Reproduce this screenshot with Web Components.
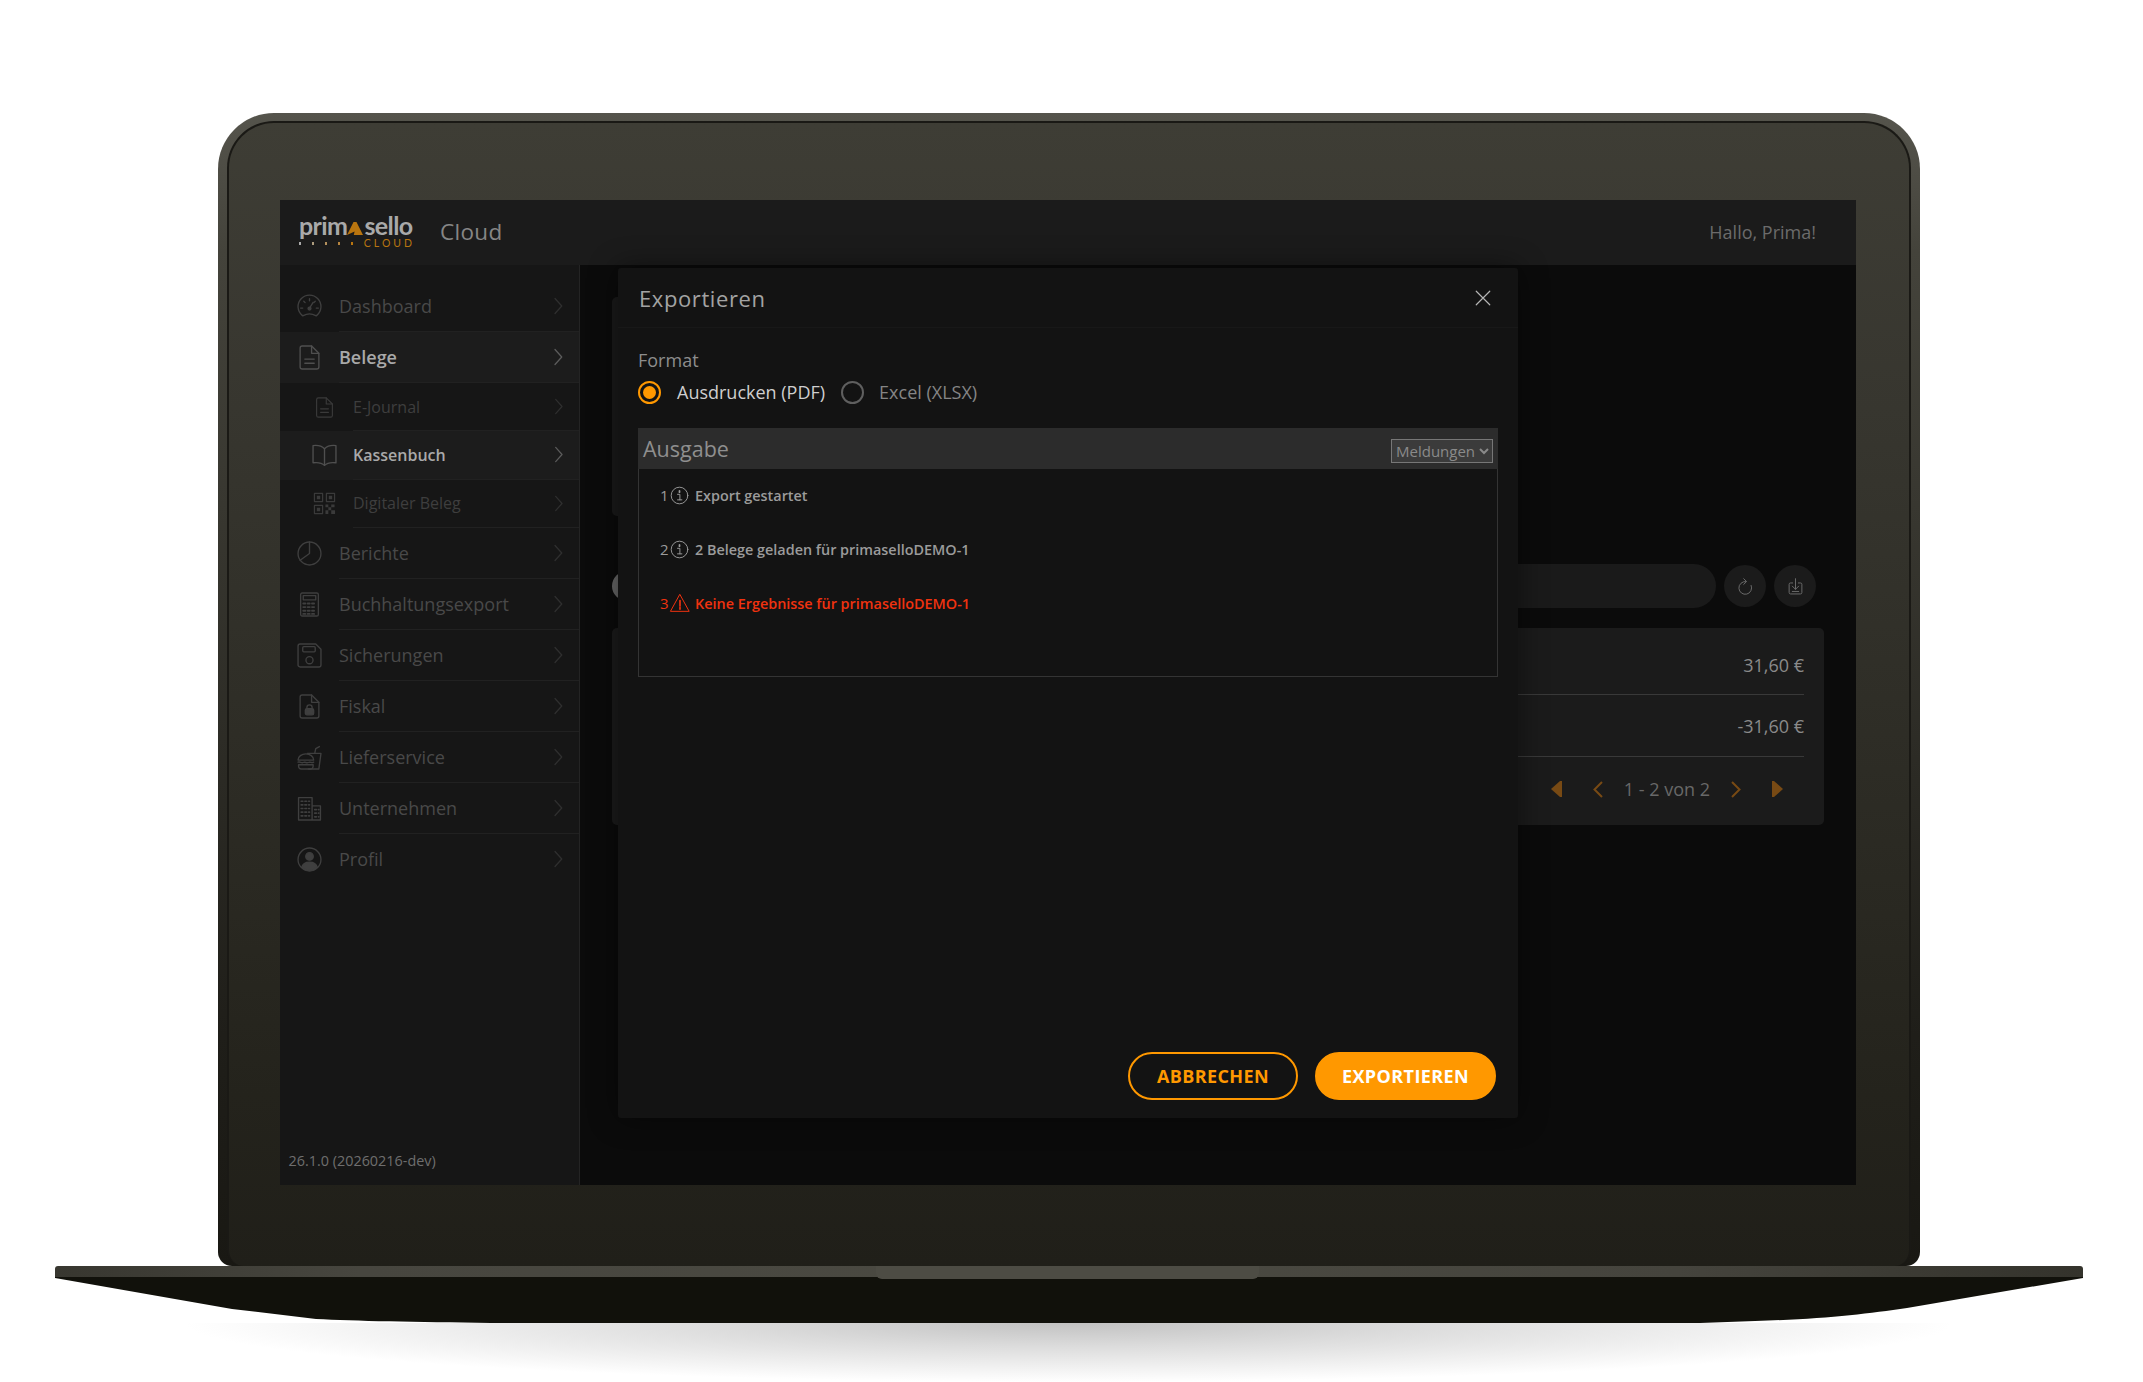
<!DOCTYPE html>
<html lang="de">
<head>
<meta charset="utf-8">
<title>primasello Cloud</title>
<style>
  html, body { margin: 0; background: #fff; }
  body { width: 2143px; height: 1382px; overflow: hidden; font-family: "Open Sans", "Liberation Sans", sans-serif; }
</style>
</head>
<body>

<laptop-frame>
  <cloud-header></cloud-header>
  <side-nav slot="nav">
    <nav-item icon="gauge">Dashboard</nav-item>
    <nav-item icon="doc" active>Belege</nav-item>
    <nav-item icon="doc" sub size="21">E-Journal</nav-item>
    <nav-item icon="book" sub active>Kassenbuch</nav-item>
    <nav-item icon="qr" sub size="23">Digitaler Beleg</nav-item>
    <nav-item icon="pie">Berichte</nav-item>
    <nav-item icon="calc">Buchhaltungsexport</nav-item>
    <nav-item icon="floppy">Sicherungen</nav-item>
    <nav-item icon="lockdoc">Fiskal</nav-item>
    <nav-item icon="burger">Lieferservice</nav-item>
    <nav-item icon="building">Unternehmen</nav-item>
    <nav-item icon="user" last>Profil</nav-item>
    <span slot="version">26.1.0 (20260216-dev)</span>
  </side-nav>
  <receipt-page slot="main">
    <export-dialog slot="dialog">
      <radio-option checked>Ausdrucken (PDF)</radio-option>
      <radio-option>Excel (XLSX)</radio-option>
      <log-row slot="log" nr="1">Export gestartet</log-row>
      <log-row slot="log" nr="2">2 Belege geladen für primaselloDEMO-1</log-row>
      <log-row slot="log" nr="3" error>Keine Ergebnisse für primaselloDEMO-1</log-row>
    </export-dialog>
  </receipt-page>
</laptop-frame>

<script type="module">
    const ICONS = {
        gauge: '<path d="M5 20.5A11 11 0 1 1 19 20.5C19 21 18.5 21 18 20.7C14.5 18.8 9.5 18.8 6 20.7C5.5 21 5 21 5 20.5Z"/><path d="M12 13.5L15.5 8"/><circle cx="12" cy="14" r="1.4" fill="currentColor"/><path d="M12 4.5V6.5M6.5 7L7.8 8.3M17.5 7L16.2 8.3M3.5 13.5H5.5M18.5 13.5H20.5"/>',
        doc: '<path d="M5 1H14L21 8V21A2 2 0 0 1 19 23H5A2 2 0 0 1 3 21V3A2 2 0 0 1 5 1Z"/><path d="M14 1V8H21M7.5 13.5H16.5M7.5 17.5H16.5"/>',
        book: '<path d="M12 5.5C9.5 3 5 2 1 2.5V19C5 18.5 9.5 19 12 21.5C14.5 19 19 18.5 23 19V2.5C19 2 14.5 3 12 5.5Z"/><path d="M12 5.5V21.5"/>',
        qr: '<path d="M1.5 1.5H10V10H1.5ZM14 1.5H22.5V10H14ZM1.5 14H10V22.5H1.5Z"/><path fill="currentColor" stroke="none" d="M4 4H7.5V7.5H4ZM16.5 4H20V7.5H16.5ZM4 16.5H7.5V20H4ZM13 13H16V16H13ZM19 13H22.5V16H19ZM16 16H19V19H16ZM13 19H16V23H13ZM19 19H23V23H19Z"/>',
        pie: '<circle cx="12" cy="12" r="11"/><path d="M12 1V12L3 18.5"/>',
        calc: '<rect x="3.5" y="1" width="17" height="22" rx="1.5"/><rect x="6" y="3.5" width="12" height="4"/><path stroke-dasharray="2 2.2" stroke-width="1.8" d="M6 11H18M6 14.5H18M6 18H18M6 21H18"/>',
        floppy: '<path d="M3 1H18L23 6V21A2 2 0 0 1 21 23H3A2 2 0 0 1 1 21V3A2 2 0 0 1 3 1Z"/><rect x="5.5" y="3.5" width="12" height="5" rx="1"/><circle cx="12" cy="16.5" r="3.4"/>',
        lockdoc: '<path d="M5 1H14L21 8V21A2 2 0 0 1 19 23H5A2 2 0 0 1 3 21V3A2 2 0 0 1 5 1Z"/><path d="M14 1V8H21M9.5 14V13A2.5 2.5 0 0 1 14.5 13V14"/><rect x="8" y="14" width="8" height="6" rx="1.5" fill="currentColor"/>',
        burger: '<path d="M10 8H23L21 23H11M17 8L18 3.5L21.5 1.5"/><path d="M1 14.5C1 11 4.5 8.5 8.5 8.5S16 11 16 14.5ZM1 16.5C3 15.5 4 17.8 6 16.8S9 17.8 11 16.8S14 17.8 16 16.5"/><path d="M1.5 19H15.5V20.5A2.5 2.5 0 0 1 13 23H4A2.5 2.5 0 0 1 1.5 20.5Z"/>',
        building: '<path d="M1.5 23V1.5H14.5V23ZM14.5 9.5H22.5V23H1.5"/><path stroke-dasharray="1.6 2" stroke-width="1.6" d="M4 5H12M4 8.5H12M4 12H12M4 15.5H12M4 19H12M17 13H21M17 16.5H21M17 20H21"/>',
        user: '<circle cx="12" cy="12" r="11"/><circle cx="12" cy="9" r="3.6" fill="currentColor"/><path fill="currentColor" d="M4.5 19.5C5.5 16 8.5 14.5 12 14.5S18.5 16 19.5 19.5C15 23.5 9 23.5 4.5 19.5Z"/>',
        chevron: '<path d="M8 2L17 12L8 22"/>',
        close: '<path d="M3 3L21 21M21 3L3 21"/>',
        info: '<circle cx="12" cy="12" r="10.5"/><path d="M9.5 10.5H12.5V17.5M9.5 17.5H15"/><path stroke-width="2.2" d="M12 6.2V7.8"/>',
        warn: '<path d="M12 2L23 22H1Z"/><path stroke-width="2" d="M12 9V15.5M12 17.5V19.5"/>',
        refresh: '<path d="M20 10.5A9 9 0 1 1 12.5 5"/><path d="M9.5 1L13.5 5L9.5 9"/>',
        save: '<path d="M8 7H5A2 2 0 0 0 3 9V20.5A2 2 0 0 0 5 22.5H19A2 2 0 0 0 21 20.5V9A2 2 0 0 0 19 7H16"/><path d="M12 1V16M7.5 11.5L12 16L16.5 11.5"/><path d="M7.5 19H16.5"/>'
    };

    function shadow(host, html) {
        host.attachShadow({ mode: 'open' }).innerHTML = html;
    }

    class AppIcon extends HTMLElement {
        connectedCallback() {
            const size = this.getAttribute('size') || 25;
            const sw = this.getAttribute('stroke') || 1.3;
            shadow(this, `<style>
                :host { display: inline-flex; flex: none; width: ${size}px; height: ${size}px; }
                svg { width: 100%; height: 100%; display: block; overflow: visible; }
            </style>
            <svg viewBox="0 0 24 24" fill="none" stroke="currentColor" stroke-width="${sw}" stroke-linecap="round" stroke-linejoin="round">${ICONS[this.getAttribute('name')]}</svg>`);
        }
    }

    class LaptopFrame extends HTMLElement {
        constructor() {
            super();
            shadow(this, `<style>
                :host { display: block; width: 2028px; padding: 113px 0 0 55px; }
                .lid { margin: 0 163px; height: 1153px; box-sizing: border-box; padding: 8px 9px 0 9px; border-radius: 56px 56px 14px 14px;
                       background: linear-gradient(#55544c, #44433b 12%, #1f1e19 80%, #191813); }
                .bezel { height: 100%; box-sizing: border-box; padding: 77px 51px 0; border-radius: 47px 47px 16px 16px; border: 2px solid #1a1915;
                         border-bottom: 0; background: linear-gradient(#3e3d35, #37362f 25%, #24231c 85%, #201f19); }
                .screen { width: 1576px; height: 985px; display: flex; flex-direction: column; background: #0b0b0b; overflow: hidden; }
                .row { flex: 1; display: flex; min-height: 0; }
                .deck { position: relative; height: 11px; border-radius: 3px 3px 0 0; background: linear-gradient(90deg, #383730, #47463f 15%, #4b4a42 50%, #45443d 80%, #34332c); }
                .notch { position: absolute; left: 821px; width: 383px; top: 0; height: 13px; border-radius: 0 0 6px 6px; background: #4d4c44; }
                svg { display: block; }
                .floor { height: 59px; margin: 0 130px; background: radial-gradient(ellipse 50% 100% at 50% 0, #c2c2c2, #dcdcdc 40%, rgba(255,255,255,0) 100%); }
            </style>
            <div class="lid"><div class="bezel"><div class="screen">
                <slot></slot>
                <div class="row"><slot name="nav"></slot><slot name="main"></slot></div>
            </div></div></div>
            <div class="deck"><div class="notch"></div></div>
            <svg width="2028" height="46" viewBox="0 0 2028 46"><path fill="#11110b" d="M0 0H2028V1L1852 31C1810 37 1770 42 1700 44L1645 46H436C360 45 300 44 261 42L177 32L0 1Z"/></svg>
            <div class="floor"></div>`);
        }
    }

    class CloudHeader extends HTMLElement {
        constructor() {
            super();
            shadow(this, `<style>
                :host { display: flex; align-items: center; flex: none; height: 65px; box-sizing: border-box; padding: 0 40px 2px 19px; background: #1b1b1b; color: #868686; font-family: "Open Sans", sans-serif; }
                .logo { width: 116px; margin: 0 25px 3px 0; font-family: Lato, sans-serif; }
                .word { display: flex; align-items: flex-end; height: 26px; font-size: 25px; font-weight: 700; line-height: 26px; letter-spacing: -.6px; color: #a9a9a9; }
                .word svg { margin: 0 1px 3px 0; flex: none; }
                .sub { display: flex; align-items: center; height: 9px; margin-top: 1px; }
                .sub i { width: 3px; height: 3px; margin-right: 10.5px; }
                .sub span { font-size: 10.5px; line-height: 9px; letter-spacing: 3px; color: #b9750f; }
                .title { font-size: 22.5px; letter-spacing: .3px; margin-bottom: 1px; }
                .hello { margin-left: auto; font-size: 18px; color: #6b6b6b; }
            </style>
            <div class="logo">
                <div class="word">prim<svg width="16" height="13" viewBox="0 0 16 13"><path fill="#b9750f" d="M0 13L6.5 0H9.5L16 13H6.8L7.6 9.5Z"/></svg>sello</div>
                <div class="sub"><i style="background:#a9a9a9"></i><i style="background:#ad9c7e"></i><i style="background:#b3905c"></i><i style="background:#b5843f"></i><i style="background:#b9750f"></i><span>CLOUD</span></div>
            </div>
            <span class="title">Cloud</span>
            <span class="hello">Hallo, Prima!</span>`);
        }
    }

    class SideNav extends HTMLElement {
        constructor() {
            super();
            shadow(this, `<style>
                :host { display: flex; flex-direction: column; flex: none; width: 300px; height: 100%; box-sizing: border-box; padding-top: 16px; background: #161616; border-right: 1px solid #242424; font-family: "Open Sans", sans-serif; }
                .version { margin-top: auto; padding: 0 0 14px 8.5px; font-size: 14.4px; line-height: 20px; color: #6e6e6e; }
            </style>
            <slot></slot>
            <div class="version"><slot name="version"></slot></div>`);
        }
    }

    class NavItem extends HTMLElement {
        connectedCallback() {
            const sub = this.hasAttribute('sub');
            const active = this.hasAttribute('active');
            const size = this.getAttribute('size') || 25;
            const box = 25;
            shadow(this, `<style>
                :host { display: flex; align-items: stretch; box-sizing: border-box; height: ${sub ? 48.2 : 51.1}px; background: ${active ? '#1c1c1c' : 'transparent'}; color: ${active ? '#a9a9a9' : (sub ? '#3e3e3e' : '#494949')}; }
                .ic { flex: none; display: flex; align-items: center; justify-content: center; width: ${box}px; margin-left: ${sub ? 32 : 17}px; margin-right: ${sub ? 16 : 17}px; color: ${active ? '#4f4f4f' : (sub ? '#3a3a3a' : '#3f3f3f')}; }
                .line { flex: 1; display: flex; align-items: center; justify-content: space-between; padding-right: 12px; border-bottom: 1px solid ${this.hasAttribute('last') ? 'transparent' : '#212121'}; font-size: ${sub ? 16 : 18}px; font-weight: ${active ? 600 : 400}; }
                .chev { color: ${active ? '#5c5c5c' : '#2f2f2f'}; }
            </style>
            <div class="ic"><app-icon name="${this.getAttribute('icon')}" size="${size}"></app-icon></div>
            <div class="line"><span><slot></slot></span><app-icon class="chev" name="chevron" size="${sub ? 17 : 18}" stroke="1.7"></app-icon></div>`);
        }
    }

    class ReceiptPage extends HTMLElement {
        constructor() {
            super();
            shadow(this, `<style>
                :host { display: block; position: relative; flex: 1; min-width: 0; box-sizing: border-box; padding: 32px 32px 0; background: #0b0b0b; font-family: "Open Sans", sans-serif; }
                .top { width: 760px; height: 219px; border-radius: 5px; background: #1a1a1a; }
                .filter { display: flex; align-items: center; gap: 8px; height: 44px; margin-top: 48px; padding-right: 8px; }
                .toggle { flex: none; width: 30px; height: 30px; border-radius: 50%; background: #666; }
                .search { flex: 1; height: 44px; border-radius: 22px; background: #1a1a1a; }
                .round { flex: none; display: flex; align-items: center; justify-content: center; width: 42px; height: 42px; border-radius: 50%; background: #1b1b1b; color: #6a6a6a; }
                .card { margin-top: 20px; height: 197px; border-radius: 5px; background: #1b1b1b; color: #8a8a8a; font-size: 18px; }
                .amount { display: flex; align-items: center; justify-content: flex-end; margin: 0 20px; border-bottom: 1px solid #393939; }
                .pager { display: flex; align-items: center; justify-content: flex-end; height: 64px; padding-right: 41px; color: #686868; }
                .pager svg { display: block; flex: none; color: #784a14; }
                .pager span { margin: 0 21px 0 21px; }
            </style>
            <div class="top"></div>
            <div class="filter">
                <div class="toggle"></div>
                <div class="search"></div>
                <div class="round"><app-icon name="refresh" size="17" stroke="1.4"></app-icon></div>
                <div class="round"><app-icon name="save" size="17" stroke="1.4"></app-icon></div>
            </div>
            <div class="card">
                <div class="amount" style="height:67px;padding-top:7px;box-sizing:border-box">31,60 €</div>
                <div class="amount" style="height:61px">-31,60 €</div>
                <div class="pager">
                    <svg width="11" height="16" viewBox="0 0 11 16" style="margin-right:31px"><path fill="currentColor" d="M11 0V16H9L0 8L9 0Z"/></svg>
                    <svg width="10" height="17" viewBox="0 0 10 17"><path fill="none" stroke="currentColor" stroke-width="2" d="M9 1L1.5 8.5L9 16"/></svg>
                    <span>1 - 2 von 2</span>
                    <svg width="10" height="17" viewBox="0 0 10 17" style="margin-right:31px"><path fill="none" stroke="currentColor" stroke-width="2" d="M1 1L8.5 8.5L1 16"/></svg>
                    <svg width="11" height="16" viewBox="0 0 11 16"><path fill="currentColor" d="M0 0V16H2L11 8L2 0Z"/></svg>
                </div>
            </div>
            <slot name="dialog"></slot>`);
        }
    }

    class RadioOption extends HTMLElement {
        connectedCallback() {
            const on = this.hasAttribute('checked');
            shadow(this, `<style>
                :host { display: inline-flex; align-items: center; gap: ${on ? 16 : 15}px; font-size: 18px; color: ${on ? '#cfcfcf' : '#858585'}; }
                .dot { flex: none; display: flex; align-items: center; justify-content: center; width: 23px; height: 23px; box-sizing: border-box; border-radius: 50%; border: 2px solid ${on ? '#ff9800' : '#5f5f5f'}; }
                .dot i { width: 13px; height: 13px; border-radius: 50%; background: #ff9800; display: ${on ? 'block' : 'none'}; }
            </style><span class="dot"><i></i></span><span><slot></slot></span>`);
        }
    }

    class LogRow extends HTMLElement {
        connectedCallback() {
            const err = this.hasAttribute('error');
            shadow(this, `<style>
                :host { display: flex; align-items: center; height: 54px; padding-left: 21px; color: ${err ? '#f0320f' : '#9b9b9b'}; font-size: 14.4px; font-weight: 600; }
                .nr { width: 10px; font-size: 15px; font-weight: 400; }
                .ic { display: flex; margin-right: ${err ? 5 : 6}px; color: ${err ? '#f0320f' : '#9b9b9b'}; }
            </style>
            <span class="nr">${this.getAttribute('nr')}</span>
            <span class="ic"><app-icon name="${err ? 'warn' : 'info'}" size="${err ? 20 : 19}" stroke="1.2"></app-icon></span>
            <span><slot></slot></span>`);
        }
    }

    class ExportDialog extends HTMLElement {
        constructor() {
            super();
            shadow(this, `<style>
                :host { position: absolute; left: 38px; top: 3px; width: 900px; height: 850px; display: flex; flex-direction: column; border-radius: 3px; background: #131313; box-shadow: 0 0 30px rgba(0,0,0,.45); }
                header { display: flex; align-items: center; justify-content: space-between; flex: none; height: 60px; box-sizing: border-box; padding: 0 26px 0 21px; border-bottom: 1px solid #181818; font-size: 22px; letter-spacing: .6px; color: #a3a3a3; }
                .close { color: #b5b5b5; display: flex; }
                .body { flex: 1; padding: 19px 20px 0; }
                .label { font-size: 18px; line-height: 26px; color: #8d8d8d; }
                .radios { display: flex; gap: 16px; margin: 6px 0 0; height: 26px; align-items: center; }
                .out { margin-top: 23px; height: 249px; box-sizing: border-box; border: 1px solid #343434; border-top: 0; }
                .head { display: flex; align-items: center; justify-content: space-between; height: 41px; margin: 0 -1px; padding: 0 5px; background: #2c2c2c; font-size: 21.5px; color: #8f8f8f; }
                select { width: 102px; height: 24px; box-sizing: border-box; padding: 0; margin: 5px 0 0; border: 1px solid #777; border-radius: 0; background: #3b3b3b; color: #8a8a8a; font: 15px "Open Sans", sans-serif; }
                .log { margin-top: -1px; }
                footer { display: flex; justify-content: flex-end; gap: 17px; flex: none; height: 66px; padding-right: 22px; }
                button { height: 48px; box-sizing: border-box; border-radius: 24px; border: 2px solid #ff9800; font: 700 18px "Open Sans", sans-serif; letter-spacing: .4px; padding: 0; }
                .ghost { width: 170px; background: transparent; color: #ff9800; }
                .solid { width: 181px; background: #ff9800; color: #fff; }
            </style>
            <header><span>Exportieren</span><span class="close"><app-icon name="close" size="18" stroke="1.6"></app-icon></span></header>
            <div class="body">
                <div class="label">Format</div>
                <div class="radios"><slot></slot></div>
                <div class="out">
                    <div class="head"><span>Ausgabe</span><select><option>Meldungen</option></select></div>
                    <div class="log"><slot name="log"></slot></div>
                </div>
            </div>
            <footer><button class="ghost">ABBRECHEN</button><button class="solid">EXPORTIEREN</button></footer>`);
        }
    }

    customElements.define('app-icon', AppIcon);
    customElements.define('laptop-frame', LaptopFrame);
    customElements.define('cloud-header', CloudHeader);
    customElements.define('side-nav', SideNav);
    customElements.define('nav-item', NavItem);
    customElements.define('receipt-page', ReceiptPage);
    customElements.define('radio-option', RadioOption);
    customElements.define('log-row', LogRow);
    customElements.define('export-dialog', ExportDialog);
</script>
</body>
</html>
